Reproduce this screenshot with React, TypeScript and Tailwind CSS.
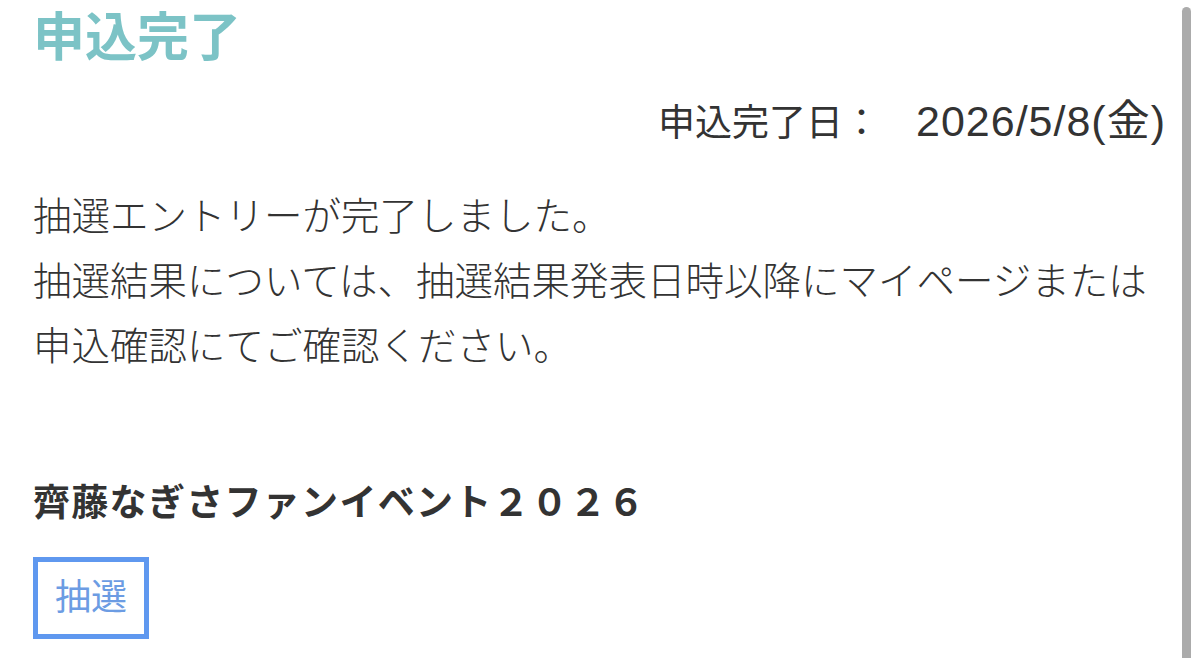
export default function App() {
  const font = { fontFamily: '"Liberation Sans", "Noto Sans CJK JP", sans-serif' };
  return (
    <div className="relative min-h-[658px] overflow-hidden bg-white pl-[33px] pr-[34px] text-[#333333]" style={font}>
      <h1 className="pt-[2px] text-[52px] font-bold leading-[72px] text-[#7cc3c6]">申込完了</h1>

      <p className="mt-[22px] flex items-baseline justify-end text-[37px] leading-[50px]">
        <span>申込完了日：</span>
        <span className="ml-[36px] text-[43px] tracking-[1px]">2026/5/8(金)</span>
      </p>

      <div className="mt-[35px] text-[38.5px] leading-[65px] font-light">
        <p>抽選エントリーが完了しました。</p>
        <p>抽選結果については、抽選結果発表日時以降にマイページまたは</p>
        <p>申込確認にてご確認ください。</p>
      </div>

      <h2 className="mt-[100px] text-[37px] font-bold leading-[50px] tracking-[1.3px] text-[#333333]">
        齊藤なぎさファンイベント２０２６
      </h2>

      <div className="mt-[28px] inline-flex h-[82px] w-[116px] items-center justify-center border-[5px] border-[#5f98ef] bg-white">
        <span className="text-[36px] leading-none text-[#6c9ce3]">抽選</span>
      </div>

      <div className="absolute right-[9px] top-[7px] bottom-0 w-[9px] rounded-t-full bg-[#ababab]" />
    </div>
  );
}
